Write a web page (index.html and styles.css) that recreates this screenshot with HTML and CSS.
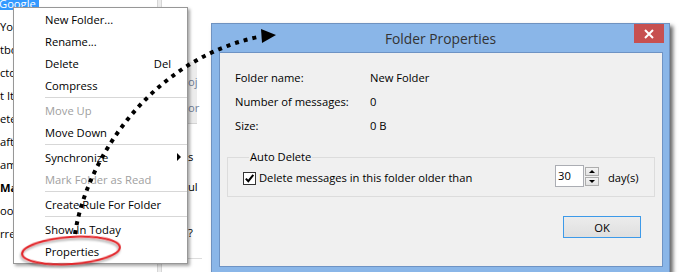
FILE: index.html
```html
<!DOCTYPE html>
<html>
<head>
<meta charset="utf-8">
<title>Folder Properties</title>
<link rel="stylesheet" href="styles.css">
</head>
<body>
<div class="app">
  <div class="list">
    <div class="row sel"><span>Google</span></div>
    <div class="row">Yo</div>
    <div class="row">tbo</div>
    <div class="row">cto</div>
    <div class="row">t It</div>
    <div class="row">ete</div>
    <div class="row">afts</div>
    <div class="row">am</div>
    <div class="row b">Ma</div>
    <div class="row">oo</div>
    <div class="row">rre</div>
  </div>
  <div class="vbar"></div>
  <div class="pane">
    <div class="tool"><div>oj</div><div>or</div></div>
    <div class="prow p1">s</div>
    <div class="prow p2">ul</div>
    <div class="prow p3">?</div>
    <div class="pline"></div>
  </div>
</div>

<div class="menu">
  <div class="mi">New Folder...</div>
  <div class="mi">Rename...</div>
  <div class="mi">Delete<span class="key">Del</span></div>
  <div class="mi">Compress</div>
  <div class="sep"></div>
  <div class="mi dis">Move Up</div>
  <div class="mi">Move Down</div>
  <div class="sep"></div>
  <div class="mi">Synchronize<span class="sub"></span></div>
  <div class="mi dis">Mark Folder as Read</div>
  <div class="sep"></div>
  <div class="mi">Create Rule For Folder</div>
  <div class="sep"></div>
  <div class="mi">Show In Today</div>
  <div class="mi">Properties</div>
</div>

<div class="dialog">
  <div class="titlebar">
    <span class="title">Folder Properties</span>
    <span class="close"><svg width="10" height="10" viewBox="0 0 10 10"><path d="M1 1 L9 9 M9 1 L1 9" stroke="#fff" stroke-width="2"/></svg></span>
  </div>
  <div class="body">
    <div class="client">
      <div class="props">
        <div class="prop"><span class="k">Folder name:</span><span>New Folder</span></div>
        <div class="prop"><span class="k">Number of messages:</span><span>0</span></div>
        <div class="prop"><span class="k">Size:</span><span>0 B</span></div>
      </div>
      <div class="group">
        <div class="legend">Auto Delete</div>
        <div class="checkrow">
          <span class="cb"><svg width="11" height="11" viewBox="0 0 11 11"><path d="M1.8 5.6 L4.3 8.2 L9.3 1.8" fill="none" stroke="#000" stroke-width="2"/></svg></span>
          <span class="cl">Delete messages in this folder older than</span>
          <div class="spin">
            <span class="num">30</span>
            <div class="spinbtns"><span class="sb up"></span><span class="sb dn"></span></div>
          </div>
          <span class="days">day(s)</span>
        </div>
      </div>
      <div class="actions"><span class="ok">OK</span></div>
    </div>
  </div>
</div>

<svg class="overlay" width="680" height="272" viewBox="0 0 680 272">
  <defs>
    <filter id="sh" x="-20%" y="-50%" width="140%" height="200%">
      <feDropShadow dx="-1" dy="2" stdDeviation="1.2" flood-color="#000" flood-opacity="0.35"/>
    </filter>
  </defs>
  <ellipse cx="71" cy="250.5" rx="49" ry="13.5" transform="rotate(-4 71 250.5)" fill="none" stroke="#e3262b" stroke-width="2" filter="url(#sh)"/>
  <path d="M75 234 C86 160 150 60 258 37" fill="none" stroke="#000" stroke-width="4" stroke-dasharray="4 5"/>
  <polygon points="261,29 276,35 262,43" fill="#000"/>
</svg>
</body>
</html>
```

FILE: styles.css
```css
body {
  margin: 0;
  width: 680px;
  height: 272px;
  overflow: hidden;
  position: relative;
  background: #fff;
  font-family: "Open Sans", "Noto Sans", sans-serif;
  font-size: 11.2px;
  color: #000;
}

.app {
  display: flex;
  height: 272px;
}

.list {
  width: 157px;
  margin-top: -8px;
  overflow: hidden;
}

.row {
  height: 23px;
  line-height: 23px;
  white-space: nowrap;
}

.row.sel span {
  display: inline-block;
  height: 18px;
  background: #3399ff;
  color: #fff;
  margin-left: -1px;
  padding-right: 3px;
}

.b {
  font-weight: bold;
}

.vbar {
  width: 5px;
  box-sizing: border-box;
  background: #ececec;
  border-left: 1px solid #d6d6d6;
  border-right: 1px solid #d6d6d6;
}

.pane {
  flex: 1;
}

.tool {
  margin-top: 62px;
  width: 35px;
  height: 62px;
  box-sizing: border-box;
  background: #ececec;
  border-bottom: 1px solid #d4d4d4;
  padding: 7px 0 0 26px;
  color: #6f7f98;
}

.tool div {
  height: 26px;
  line-height: 26px;
}

.prow {
  padding-left: 26px;
  height: 20px;
  line-height: 20px;
}

.p1 { margin-top: 23px; }
.p2 { margin-top: 10px; }
.p3 { margin-top: 26px; }

.pline {
  margin-top: 15px;
  width: 40px;
  height: 1px;
  background: #dddddd;
}

/* context menu */
.menu {
  position: absolute;
  left: 13px;
  top: 7px;
  width: 173px;
  padding-bottom: 1px;
  border: 1px solid #979797;
  background: #fff;
  box-shadow: 2px 2px 3px rgba(0, 0, 0, 0.35);
}

.mi {
  height: 22px;
  display: flex;
  align-items: center;
  padding: 0 6px 0 31px;
  white-space: nowrap;
}

.mi .key {
  margin-left: auto;
  margin-right: 10px;
}

.mi .sub {
  margin-left: auto;
  width: 0;
  height: 0;
  border-left: 4px solid #000;
  border-top: 4px solid transparent;
  border-bottom: 4px solid transparent;
}

.dis {
  color: #a0a0a0;
}

.sep {
  height: 1px;
  margin: 1px 0 1px 31px;
  background: #d7d7d7;
}

/* dialog */
.dialog {
  position: absolute;
  left: 211px;
  top: 23px;
  width: 457px;
  border: 1px solid #6f92c0;
  background: #8ab6e8;
  box-shadow: 3px 3px 4px rgba(0, 0, 0, 0.6);
}

.titlebar {
  display: grid;
  grid-template-columns: 1fr auto 1fr;
  height: 28px;
}

.title {
  grid-column: 2;
  align-self: center;
  font-size: 13.8px;
  color: #333;
}

.close {
  grid-column: 3;
  justify-self: end;
  align-self: start;
  width: 30px;
  height: 19px;
  margin-right: 5px;
  background: #c75050;
  display: flex;
  align-items: center;
  justify-content: center;
}

.body {
  padding: 0 6px 7px 7px;
}

.client {
  height: 193px;
  border: 1px solid #6e93c4;
  background: #f0f0f0;
  padding: 12px 7px 8px 7px;
  box-sizing: content-box;
  display: flex;
  flex-direction: column;
}

.client > * {
  flex: none;
}

.prop {
  height: 24px;
  display: flex;
  align-items: center;
  padding-left: 8px;
}

.prop .k {
  width: 135px;
}

.group {
  margin-top: 20px;
  height: 40px;
  box-sizing: border-box;
  border: 1px solid #dcdcdc;
  padding: 0 12px 0 15px;
}

.legend {
  margin: -9px 0 0 6px;
  width: max-content;
  height: 16px;
  line-height: 16px;
  padding: 0 1px;
  background: #f0f0f0;
}

.checkrow {
  display: flex;
  align-items: flex-start;
  height: 22px;
}

.cb {
  width: 13px;
  height: 13px;
  box-sizing: border-box;
  border: 1px solid #333;
  background: #fff;
  margin: 7px 3px 0 0;
  display: flex;
}

.cl {
  margin-top: 5px;
  line-height: 16px;
}

.spin {
  margin-left: auto;
  display: flex;
}

.num {
  width: 29px;
  height: 22px;
  box-sizing: border-box;
  border: 1px solid #abadb3;
  background: #fff;
  padding-left: 2px;
  line-height: 20px;
}

.spinbtns {
  display: flex;
  flex-direction: column;
  gap: 1px;
  margin: 2px 0 0 1px;
}

.sb {
  width: 14px;
  height: 9px;
  box-sizing: border-box;
  border: 1px solid #adadad;
  background: linear-gradient(#f4f4f4, #e2e2e2);
  display: flex;
  align-items: center;
  justify-content: center;
}

.sb::after {
  content: "";
  width: 0;
  height: 0;
  border-left: 3px solid transparent;
  border-right: 3px solid transparent;
}

.up::after {
  border-bottom: 3px solid #000;
}

.dn::after {
  border-top: 3px solid #000;
}

.days {
  width: 34px;
  margin: 5px 0 0 9px;
  line-height: 16px;
}

.actions {
  margin-top: 19px;
  display: flex;
  justify-content: flex-end;
  padding-right: 14px;
}

.ok {
  width: 78px;
  height: 22px;
  box-sizing: border-box;
  border: 1px solid #3d9ae9;
  background: linear-gradient(#ececec, #dfdfdf);
  display: flex;
  align-items: center;
  justify-content: center;
}

.overlay {
  position: absolute;
  left: 0;
  top: 0;
  pointer-events: none;
}
```
